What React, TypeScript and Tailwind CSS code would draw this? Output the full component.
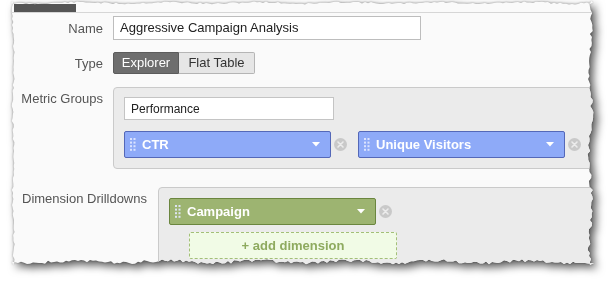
import React from 'react';

// jagged outline for the torn-paper look
function tornPath(w: number, h: number, amp: number) {
  let seed = 11;
  const rnd = () => {
    seed = (seed * 9301 + 49297) % 233280;
    return seed / 233280;
  };
  const j = (i: number, a: number) => (Math.sin(i * 0.21) * 0.35 + 0.5) * a * 0.6 + rnd() * a * 0.5;
  const pts: string[] = [];
  let i = 0;
  for (let x = 0; x <= w; x += 3) pts.push(`${x}px ${j(i++, amp * 0.7).toFixed(1)}px`);
  for (let y = 0; y <= h; y += 3) pts.push(`${(w - j(i++, amp * 1.3)).toFixed(1)}px ${y}px`);
  for (let x = w; x >= 0; x -= 3) pts.push(`${x}px ${(h - j(i++, amp * 1.2)).toFixed(1)}px`);
  for (let y = h; y >= 0; y -= 3) pts.push(`${j(i++, amp * 0.8).toFixed(1)}px ${y}px`);
  return `polygon(${pts.join(',')})`;
}

export default function App() {
  return (
    <div className="w-[615px] h-[284px] bg-white overflow-hidden font-['Liberation_Sans',Arial,sans-serif] pt-[1px] pl-[11px]">
      <div className="w-[583px] [filter:drop-shadow(0_0_1px_rgba(0,0,0,0.35))_drop-shadow(4px_4px_4px_rgba(0,0,0,0.65))]">
        <div className="w-[583px] h-[264px] bg-[#fafafa] overflow-hidden" style={{ clipPath: tornPath(583, 264, 5) }}>
          <div className="h-[12px] border-b border-[#d6d6d6] flex items-end">
            <div className="ml-[3px] w-[62px] h-[8px] bg-[#555]" />
          </div>

          <div className="mt-[3px] flex items-center gap-[10px]">
            <div className="w-[92px] shrink-0 whitespace-nowrap text-right text-[13px] leading-[15px] text-[#555]">Name</div>
            <div className="w-[308px] h-[24px] shrink-0 border border-[#bdbdbd] bg-white pl-[6px] flex items-center text-[13px] text-[#222]">
              Aggressive Campaign Analysis
            </div>
          </div>

          <div className="mt-[12px] flex items-center gap-[10px]">
            <div className="w-[92px] shrink-0 whitespace-nowrap text-right text-[13px] leading-[15px] text-[#555]">Type</div>
            <div className="flex h-[22px] text-[13px]">
              <div className="w-[66px] bg-[#6e6e6e] border border-[#5c5c5c] rounded-l-[2px] text-white flex items-center justify-center">Explorer</div>
              <div className="w-[76px] bg-[#e6e6e6] border border-l-0 border-[#b5b5b5] rounded-r-[2px] text-[#333] flex items-center justify-center">Flat Table</div>
            </div>
          </div>

          <div className="mt-[13px] flex items-start gap-[10px]">
            <div className="w-[92px] shrink-0 whitespace-nowrap pt-[4px] text-right text-[13px] leading-[15px] text-[#555]">Metric Groups</div>
            <div className="w-[520px] h-[82px] shrink-0 bg-[#ebebeb] border border-[#cacaca] rounded-[4px] pl-[10px] pt-[9px]">
              <div className="w-[210px] h-[23px] border border-[#c4c4c4] bg-white pl-[6px] flex items-center text-[12px] text-[#222]">
                Performance
              </div>
              <div className="mt-[11px] flex items-center">
                <Pill label="CTR" tone="blue" />
                <RemoveIcon className="ml-[3px] mr-[11px]" />
                <Pill label="Unique Visitors" tone="blue" />
                <RemoveIcon className="ml-[3px] mr-[11px]" />
                <div className="w-[40px] h-[27px] shrink-0 bg-[#8eaaf8] border border-[#5468b8] rounded-[2px]" />
              </div>
            </div>
          </div>

          <div className="mt-[18px] flex items-start">
            <div className="w-[147px] shrink-0 whitespace-nowrap pl-[11px] pt-[4px] text-[13px] leading-[15px] text-[#555]">Dimension Drilldowns</div>
            <div className="w-[480px] h-[90px] shrink-0 bg-[#ebebeb] border border-[#cacaca] rounded-[4px] pl-[10px] pt-[10px]">
              <div className="flex items-center">
                <Pill label="Campaign" tone="green" />
                <RemoveIcon className="ml-[3px]" />
              </div>
              <div className="mt-[7px] ml-[20px] w-[208px] h-[27px] bg-[#f1fbe6] border border-dashed border-[#a3bf78] rounded-[2px] flex items-center justify-center text-[13px] font-bold text-[#8eaa5f]">
                + add dimension
              </div>
            </div>
          </div>
        </div>
      </div>
    </div>
  );
}

function Pill({ label, tone }: { label: string; tone: 'blue' | 'green' }) {
  const cls =
    tone === 'blue'
      ? 'bg-[#8eaaf8] border-[#5468b8]'
      : 'bg-[#9db471] border-[#6b863f]';
  return (
    <div className={`w-[207px] h-[27px] shrink-0 border rounded-[2px] flex items-center pl-[5px] pr-[10px] ${cls}`}>
      <svg width="6" height="14" viewBox="0 0 6 14" className="shrink-0">
        {[0, 1, 2, 3].map((r) => (
          <g key={r} fill="#e4eaff" opacity="0.9">
            <rect x="0" y={r * 3.6} width="2" height="2" />
            <rect x="3.5" y={r * 3.6} width="2" height="2" />
          </g>
        ))}
      </svg>
      <span className="ml-[6px] text-[13px] font-bold text-white">{label}</span>
      <svg width="8" height="5" viewBox="0 0 8 5" className="ml-auto shrink-0">
        <path d="M0 0 H8 L4 4.5 Z" fill="#fff" />
      </svg>
    </div>
  );
}

function RemoveIcon({ className = '' }: { className?: string }) {
  return (
    <svg width="13" height="13" viewBox="0 0 13 13" className={`shrink-0 ${className}`}>
      <circle cx="6.5" cy="6.5" r="6.5" fill="#c9c9c9" />
      <path d="M4 4 L9 9 M9 4 L4 9" stroke="#ececec" strokeWidth="1.6" strokeLinecap="round" />
    </svg>
  );
}
